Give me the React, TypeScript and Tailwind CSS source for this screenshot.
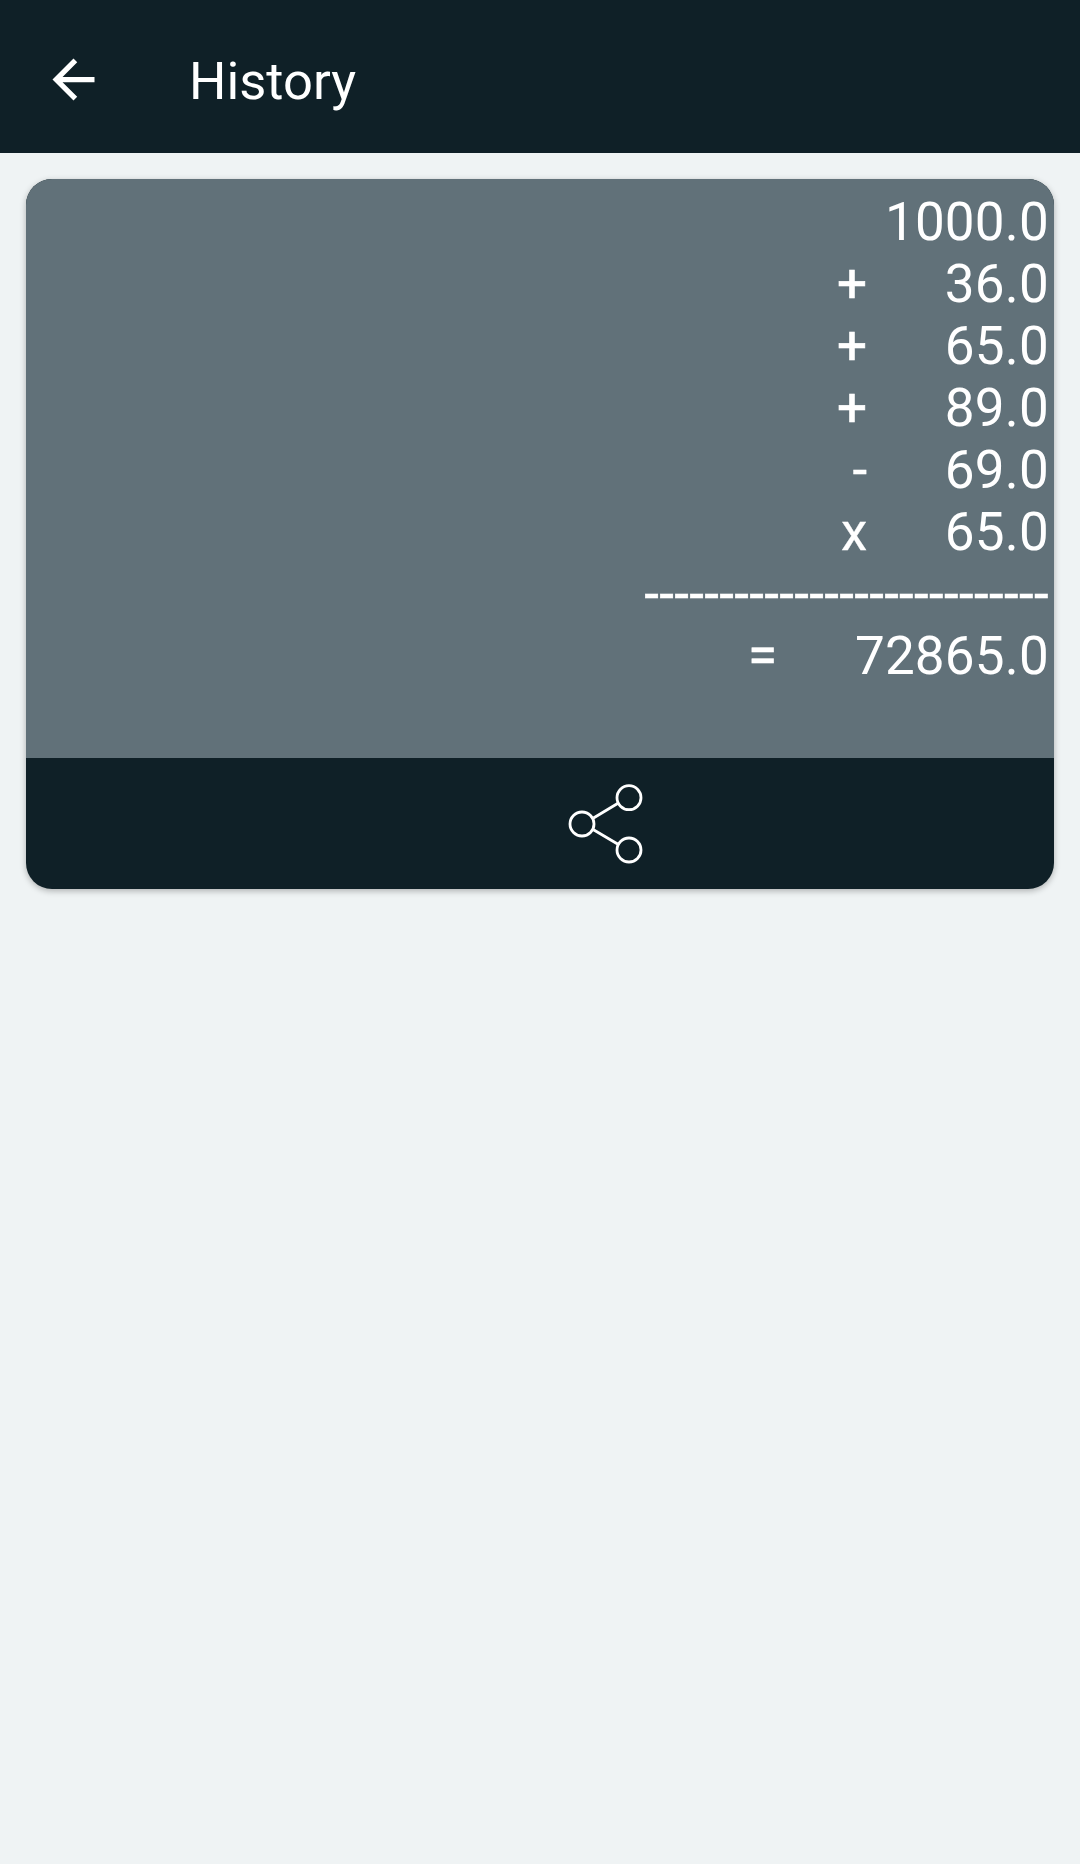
const rows = [
  { op: "", value: "1000.0" },
  { op: "+", value: "36.0" },
  { op: "+", value: "65.0" },
  { op: "+", value: "89.0" },
  { op: "-", value: "69.0" },
  { op: "x", value: "65.0" },
];

function BackArrow() {
  return (
    <svg className="mb-[3px] h-[63px] w-[63px]" viewBox="0 0 24 24" fill="white">
      <path d="M20 11H7.830l5.590-5.590L12 4l-8 8 8 8 1.410-1.410L7.830 13H20z" />
    </svg>
  );
}

function ShareIcon() {
  return (
    <svg className="h-[80px] w-[76px]" viewBox="0 0 76 80" fill="none" stroke="white" strokeWidth="2.8">
      <circle cx="14" cy="40" r="12" />
      <circle cx="61" cy="13.700" r="12" />
      <circle cx="61" cy="66" r="12" />
      <path d="M25.500 34L50 19.300M25.500 45.700L50 60.300" />
    </svg>
  );
}

function Line({ op, value }: { op: string; value: string }) {
  return (
    <div>
      {op && (
        <>
          <span className={op === "+" || op === "=" ? "[-webkit-text-stroke:0.6px_white]" : "[-webkit-text-stroke:0.3px_white]"}>{op}</span>
          <span className="tracking-[-0.2px]">{"      "}</span>
        </>
      )}
      <span className="tracking-[0.2px]">{value}</span>
    </div>
  );
}

export default function App() {
  return (
    <div className="min-h-[1864px] w-full bg-[#eff3f4] font-['Roboto',sans-serif] text-white">
      <header className="flex h-[153px] items-center bg-[#0f2027] pt-[8px] pl-[42px]">
        <BackArrow />
        <h1 className="mt-[1px] ml-[84px] text-[52.5px] leading-[62px]">History</h1>
      </header>
      <main className="px-[26px] pt-[26px]">
        <section className="h-[710px] overflow-hidden rounded-[26px] bg-[#0f2027] shadow-[0_2px_6px_rgba(0,0,0,0.28)]">
          <div className="h-[579px] bg-[#617179] pt-[12px] pr-[5px] text-right text-[53px] leading-[62px] whitespace-pre">
            {rows.map((r, i) => (
              <Line key={i} op={r.op} value={r.value} />
            ))}
            <div className="tracking-[0.34px] [-webkit-text-stroke:0.4px_white]">---------------------------</div>
            <Line op="=" value="72865.0" />
          </div>
          <div className="flex h-[131px] items-center pl-[542px]">
            <ShareIcon />
          </div>
        </section>
      </main>
    </div>
  );
}
